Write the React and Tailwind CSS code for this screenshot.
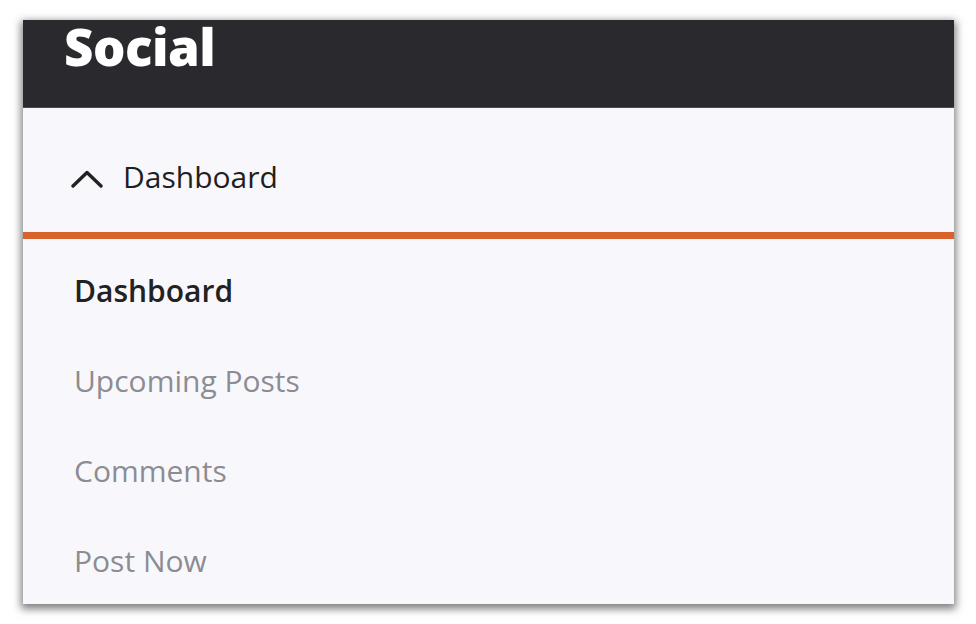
const items = [
    { label: "Dashboard", active: true },
    { label: "Upcoming Posts" },
    { label: "Comments" },
    { label: "Post Now" },
]

export default function App() {
    return (
        <div className="h-[624px] w-[976px] bg-white pl-[23px] pt-[20px] overflow-hidden" style={{ fontFamily: "'Open Sans', 'Noto Sans', sans-serif" }}>
            <div className="flex h-[584px] w-[931px] flex-col bg-[#f8f8fc] shadow-[0_3px_8px_2px_rgba(0,0,0,0.5)]">
                {/* top bar */}
                <div className="h-[88px] shrink-0 border-b border-[#4a4a4f] bg-[#2a292e] pl-[41px] pt-[6px]">
                    <h1 className="text-[51px] font-extrabold leading-[40px] tracking-[-0.5px] text-white">Social</h1>
                </div>

                {/* section toggle */}
                <div className="flex h-[124px] shrink-0 items-center gap-[20px] pl-[48px] pt-[12px]">
                    <svg width="32" height="18" viewBox="0 0 32 18" fill="none" className="mt-[5px] shrink-0">
                        <polyline points="2,16 16,2.5 30,16" stroke="#222" strokeWidth="3.4" strokeLinecap="round" strokeLinejoin="round" />
                    </svg>
                    <span className="text-[30px] font-medium text-[#1f1f22]">Dashboard</span>
                </div>
                <div className="h-[7px] shrink-0 bg-[#d9632c]" />

                {/* nav items */}
                <nav className="flex flex-col pl-[51px] pt-[6px]">
                    {items.map((item) => (
                        <a
                            key={item.label}
                            className={`flex h-[90px] items-center text-[30px] ${item.active ? "font-semibold text-[#222]" : "text-[#8c8c92]"}`}
                        >
                            {item.label}
                        </a>
                    ))}
                </nav>
            </div>
        </div>
    )
}
